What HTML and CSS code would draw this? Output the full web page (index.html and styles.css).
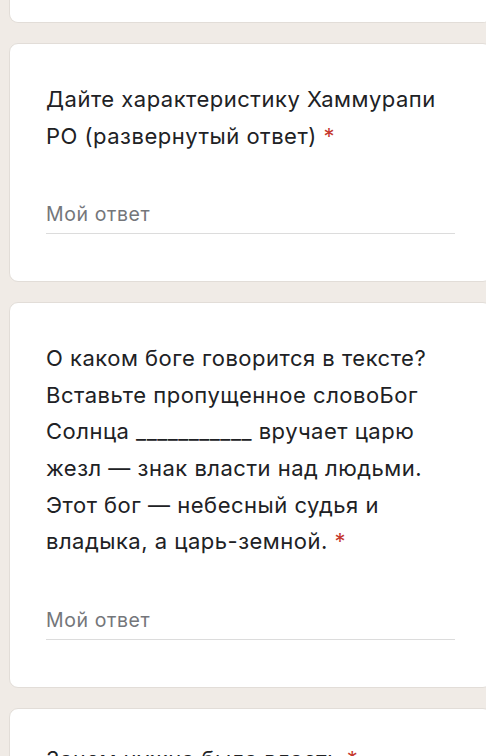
FILE: index.html
```html
<!DOCTYPE html>
<html lang="ru">
<head>
    <meta charset="UTF-8">
    <meta name="viewport" content="width=device-width, initial-scale=1.0">
    <title>Древний Вавилон</title>
    <link rel="stylesheet" href="styles.css">
</head>
<body>
    <div class="form">
        <div class="card card-tail"></div>

        <div class="card">
            <div class="question">Дайте характеристику Хаммурапи РО (развернутый ответ) <span class="required">*</span></div>
            <input class="answer" type="text" placeholder="Мой ответ">
        </div>

        <div class="card">
            <div class="question">О каком боге говорится в тексте? Вставьте пропущенное словоБог Солнца ___________ вручает царю жезл — знак власти над людьми. Этот бог — небесный судья и владыка, а царь-земной. <span class="required">*</span></div>
            <input class="answer" type="text" placeholder="Мой ответ">
        </div>

        <div class="card card-next">
            <div class="question">Зачем нужна была власть <span class="required">*</span></div>
            <input class="answer" type="text" placeholder="Мой ответ">
        </div>
    </div>
</body>
</html>
```
FILE: styles.css
```css
html, body {
    overflow: hidden;
}

body {
    background-color: #f0ebe6;
    color: #202124;
    font-family: Inter, "Open Sans", Arial, sans-serif;
    margin: 0;
    padding: 0;
}

.form {
    display: flex;
    flex-direction: column;
    gap: 20px;
    padding-left: 9px;
    width: 483px;
}

.card {
    background-color: #fff;
    border: 1px solid #e2ddd8;
    border-radius: 9px;
    padding: 37px 36px 47px;
}

.card-tail {
    height: 23px;
    padding: 0;
    box-sizing: border-box;
    border-top: none;
    border-radius: 0 0 9px 9px;
}

.card-next {
    padding-top: 32px;
}

.question {
    font-size: 22px;
    line-height: 36.6px;
    letter-spacing: 0.5px;
    margin-bottom: 45px;
}

.required {
    color: #c5372c;
}

.answer {
    display: block;
    width: 100%;
    box-sizing: content-box;
    height: 30px;
    padding: 0 0 4px;
    border: none;
    border-bottom: 1px solid #dcdcdc;
    font-family: Inter, "Open Sans", Arial, sans-serif;
    font-size: 19.5px;
    letter-spacing: 0.6px;
    color: #202124;
    background: transparent;
    outline: none;
}

.answer::placeholder {
    color: #74767a;
}
```
